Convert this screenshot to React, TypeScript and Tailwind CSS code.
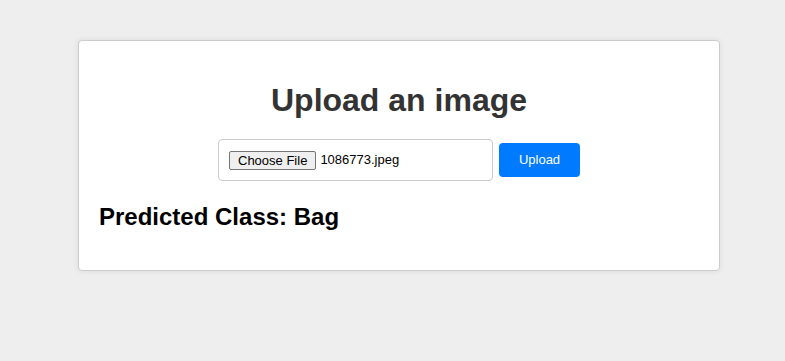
export default function App() {
  return (
    <div className="min-h-screen bg-[#eeeeee] pt-[40px] font-['Liberation_Sans',Arial,sans-serif]">
      <div className="ml-[78px] w-[642px] rounded-[4px] border border-[#cccccc] bg-white px-5 py-5 shadow-[0_0_6px_rgba(0,0,0,0.08)]">
        <h1 className="mt-[21px] mb-[20px] text-center text-[32px] leading-[37px] font-bold text-[#333333]">
          Upload an image
        </h1>

        <form className="flex items-center justify-center gap-[6px]">
          <div className="flex h-[42px] w-[275px] items-center rounded-[4px] border border-[#cccccc] px-[10px] text-[13px] text-black">
            <span className="flex h-[19px] items-center rounded-[2px] border border-[#767676] bg-[#efefef] px-[8px] text-[13px] leading-none text-black">
              Choose File
            </span>
            <span className="ml-[4px]">1086773.jpeg</span>
          </div>
          <button
            type="button"
            className="h-[34px] w-[81px] rounded-[4px] bg-[#007bff] text-[13px] text-white"
          >
            Upload
          </button>
        </form>

        <h2 className="mt-[22px] mb-[19px] text-[24px] leading-[28px] font-bold text-black">
          Predicted Class: Bag
        </h2>
      </div>
    </div>
  );
}
